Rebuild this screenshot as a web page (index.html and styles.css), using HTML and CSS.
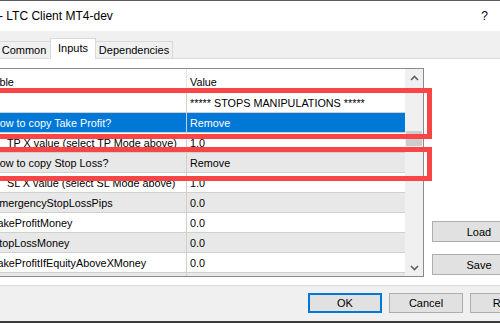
FILE: index.html
```html
<!DOCTYPE html>
<html lang="en">
<head>
    <meta charset="UTF-8">
    <title>LTC Client MT4-dev</title>
    <link rel="stylesheet" href="styles.css">
</head>
<body>

<div class="titlebar">
    <span class="title">- LTC Client MT4-dev</span>
    <span class="help">?</span>
</div>

<div class="tabs">
    <div class="tab first">Common</div>
    <div class="tab active">Inputs</div>
    <div class="tab">Dependencies</div>
</div>

<div class="panel">
    <div class="grid">
        <div class="list">
            <div class="row head">
                <div class="name">Variable</div>
                <div class="value">Value</div>
            </div>
            <div class="row">
                <div class="name"></div>
                <div class="value">***** STOPS MANIPULATIONS *****</div>
            </div>
            <div class="row selected">
                <div class="name">How to copy Take Profit?</div>
                <div class="value">Remove</div>
            </div>
            <div class="row">
                <div class="name sub">TP X value (select TP Mode above)</div>
                <div class="value">1.0</div>
            </div>
            <div class="row alt">
                <div class="name">How to copy Stop Loss?</div>
                <div class="value">Remove</div>
            </div>
            <div class="row">
                <div class="name sub">SL X value (select SL Mode above)</div>
                <div class="value">1.0</div>
            </div>
            <div class="row alt">
                <div class="name">EmergencyStopLossPips</div>
                <div class="value">0.0</div>
            </div>
            <div class="row">
                <div class="name">TakeProfitMoney</div>
                <div class="value">0.0</div>
            </div>
            <div class="row alt">
                <div class="name">StopLossMoney</div>
                <div class="value">0.0</div>
            </div>
            <div class="row">
                <div class="name">TakeProfitIfEquityAboveXMoney</div>
                <div class="value">0.0</div>
            </div>
            <div class="row alt">
                <div class="name">StopLossIfEquityBelowXMoney</div>
                <div class="value">0.0</div>
            </div>
        </div>
        <div class="scrollbar">
            <div class="arrow">
                <svg width="9" height="6" viewBox="0 0 9 6"><path d="M1 5 L4.5 1.5 L8 5" fill="none" stroke="#606060" stroke-width="1.6"/></svg>
            </div>
            <div class="thumb"></div>
            <div class="arrow down">
                <svg width="9" height="6" viewBox="0 0 9 6"><path d="M1 1 L4.5 4.5 L8 1" fill="none" stroke="#606060" stroke-width="1.6"/></svg>
            </div>
        </div>
    </div>

    <div class="side-buttons">
        <button class="btn wide">Load</button>
        <button class="btn wide">Save</button>
    </div>
</div>

<div class="footer">
    <button class="btn default">OK</button>
    <button class="btn">Cancel</button>
    <button class="btn">Reset</button>
</div>
<div class="edge"></div>

<!-- red highlight frames drawn over the list -->
<div class="mark mark-tp"></div>
<div class="mark mark-sl"></div>

</body>
</html>
```

FILE: styles.css
```css
body {
    margin: 0;
    width: 500px;
    height: 323px;
    overflow: hidden;
    position: relative;
    background-color: #f0f0f0;
    font-family: "Liberation Sans", Arial, sans-serif;
    color: #000;
}

.titlebar {
    height: 30px;
    border-top: 1px solid #5d5d5d;
    background-color: #fff;
    display: flex;
    align-items: center;
    justify-content: space-between;
    font-size: 12px;
}

.title {
    margin-left: -1px;
}

.help {
    margin-right: 12px;
}

.tabs {
    height: 27px;
    border-bottom: 1px solid #d9d9d9;
    display: flex;
    align-items: flex-end;
    font-size: 11px;
}

.tab {
    box-sizing: border-box;
    flex-shrink: 0;
    height: 17px;
    line-height: 16px;
    border: 1px solid #d9d9d9;
    border-bottom: none;
    margin-left: -1px;
    text-align: center;
    background-color: #f0f0f0;
}

.tab.first {
    width: 54px;
    margin-left: -3px;
}

.tab.active {
    width: 46px;
    height: 21px;
    line-height: 19px;
    margin-bottom: -1px;
    background-color: #fff;
    position: relative;
}

.tab:last-child {
    width: 78px;
}

.panel {
    box-sizing: border-box;
    height: 227px;
    padding-top: 9px;
    background-color: #fff;
    border-bottom: 1px solid #dadada;
    display: flex;
    align-items: flex-start;
    overflow: hidden;
}

.grid {
    box-sizing: border-box;
    flex-shrink: 0;
    width: 454px;
    height: 209px;
    margin-left: -30px;
    border: 1px solid #8a8a8a;
    display: flex;
    overflow: hidden;
}

.list {
    flex: 1;
    overflow: hidden;
}

.row {
    box-sizing: border-box;
    height: 20px;
    display: flex;
    align-items: center;
    font-size: 10.8px;
    border-bottom: 1px solid #d0d0d0;
    white-space: nowrap;
}

.row.alt {
    background-color: #e8e8e8;
}

.row.selected {
    background-color: #0078d7;
    color: #fff;
}

.row .name {
    box-sizing: border-box;
    flex-shrink: 0;
    width: 216px;
    height: 100%;
    padding-left: 21px;
    line-height: 21px;
    border-right: 1px solid #d0d0d0;
    overflow: hidden;
}

.row .name.sub {
    padding-left: 36px;
}

.row .value {
    flex: 1;
    height: 100%;
    padding-left: 3px;
    line-height: 21px;
    overflow: hidden;
}

.row.head {
    height: 24px;
    border-bottom: 1px solid #e5e5e5;
}

.row.head .name {
    padding-left: 4px;
    line-height: 26px;
    border-right-color: #e5e5e5;
}

.row.head .value {
    line-height: 26px;
}

.scrollbar {
    flex-shrink: 0;
    width: 18px;
    background-color: #f0f0f0;
    display: flex;
    flex-direction: column;
}

.arrow {
    height: 17px;
    display: flex;
    align-items: center;
    justify-content: center;
}

.arrow.down {
    margin-top: auto;
}

.thumb {
    height: 15px;
    margin: 45px 1px 0 1px;
    background-color: #cdcdcd;
}

.side-buttons {
    flex-shrink: 0;
    display: flex;
    flex-direction: column;
    gap: 12px;
    padding-top: 153px;
    margin-left: 8px;
}

.btn {
    box-sizing: border-box;
    flex-shrink: 0;
    width: 74px;
    height: 20px;
    padding: 0;
    background-color: #e1e1e1;
    border: 1px solid #adadad;
    font-family: "Liberation Sans", Arial, sans-serif;
    font-size: 11px;
    color: #000;
}

.btn.wide {
    width: 94px;
    height: 21px;
}

.btn.default {
    border: 2px solid #0078d7;
}

.footer {
    height: 35px;
    box-sizing: border-box;
    padding: 7px 0 0 308px;
    display: flex;
    gap: 7px;
    overflow: hidden;
}

.edge {
    height: 2px;
    background-color: #3a3a3a;
}

.mark {
    position: absolute;
    box-sizing: border-box;
    left: -10px;
    width: 442px;
    border: 5px solid #f94545;
}

.mark-tp {
    top: 88px;
    height: 51px;
}

.mark-sl {
    top: 147px;
    height: 34px;
}
```
